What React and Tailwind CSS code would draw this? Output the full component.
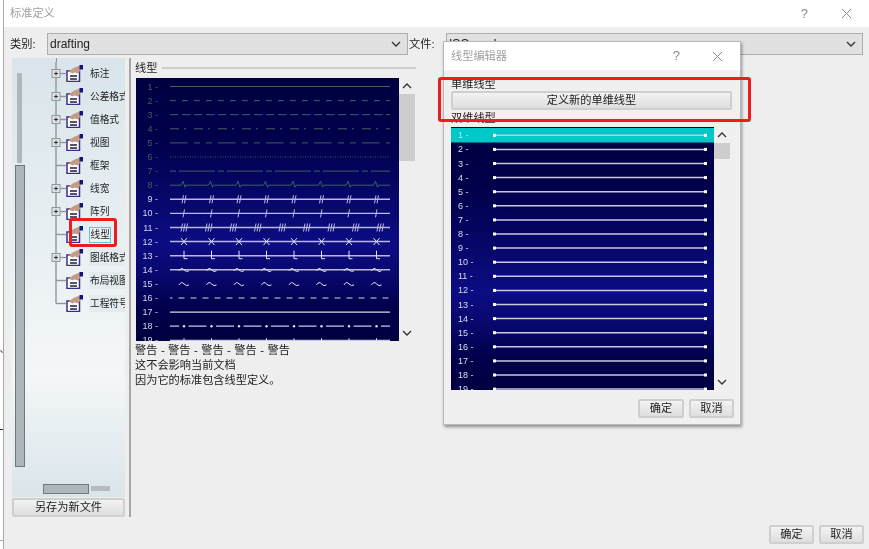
import React from 'react';

const cjk = "font-['Liberation_Sans','Noto_Sans_CJK_SC',sans-serif]";

const treeItems = [
  { name: '标注', plus: true },
  { name: '公差格式', plus: true },
  { name: '值格式', plus: true },
  { name: '视图', plus: true },
  { name: '框架' },
  { name: '线宽', plus: true },
  { name: '阵列', plus: true },
  { name: '线型', selected: true },
  { name: '图纸格式', plus: true, shaded: true },
  { name: '布局视图', shaded: true },
  { name: '工程符号', shaded: true, last: true },
];

const range = (n) => Array.from({ length: n }, (_, i) => i);

function Chevron({ up }) {
  return (
    <svg width="10" height="6" viewBox="0 0 10 6" fill="none" stroke="#333" strokeWidth="1.3">
      <path d={up ? 'M1 5l4-4 4 4' : 'M1 1l4 4 4-4'} />
    </svg>
  );
}

function TreeIcon() {
  return (
    <svg width="17" height="17" viewBox="0 0 17 17" className="shrink-0">
      <rect x="1" y="6" width="12.5" height="10.5" fill="#fff" stroke="#3c2f85" strokeWidth="1.5" />
      <path d="M2.5 6.5l5-3.5 6-2.5 1 4-2 4-4-1-2 1z" fill="#c49c86" />
      <rect x="13.5" y="0" width="3.5" height="4.5" fill="#14147a" />
      <path d="M4 11h7M4 14h7" stroke="#55556a" strokeWidth="1.8" />
    </svg>
  );
}

function TreeRow({ item }) {
  return (
    <div className="flex h-[23px] items-center">
      <svg width="34" height="23" viewBox="0 0 34 23" className="shrink-0" fill="none">
        <path d={item.last ? 'M6 0v11.5' : 'M6 0v23'} stroke="#8d989d" strokeWidth="1.4" />
        <path d="M6 11.5H16" stroke="#8d989d" strokeWidth="1.4" />
        {item.plus && (
          <>
            <rect x="2" y="7.5" width="8" height="8" fill="#dfe3e5" stroke="#8d989d" />
            <path d="M4 11.5h4M6 9.5v4" stroke="#333" />
          </>
        )}
      </svg>
      <div className="-ml-[18px] mr-[6px]">
        <TreeIcon />
      </div>
      {item.selected ? (
        <span className="h-[16px] whitespace-nowrap border border-[#55cccc] bg-[#eaf2f4] px-[0.5px] text-[9.7px] leading-[14px] text-[#222]">
          {item.name}
        </span>
      ) : (
        <span
          className={
            item.shaded
              ? 'whitespace-nowrap bg-[#e3ebef] py-[1px] pl-[1px] text-[9.7px] leading-[15px] text-[#222]'
              : 'whitespace-nowrap pl-[1px] text-[9.7px] leading-[16px] text-[#222]'
          }
        >
          {item.name}
        </span>
      )}
    </div>
  );
}

function TreePanel() {
  return (
    <div className="flex h-[439px] w-[113px] flex-col overflow-hidden bg-gradient-to-b from-[#d9e5eb] via-[#f4f7f8] via-72% to-[#dae5ea]">
      <div className="flex min-h-0 flex-1">
        <div className="flex w-[30px] shrink-0 flex-col items-start pl-[3px] pt-[15px]">
          <div className="ml-[2px] h-[90px] w-[5px] bg-[#aeb8bc]" />
          <div className="mt-[2px] h-[302px] w-[10px] border border-[#6f787c] bg-[#adb6ba]" />
        </div>
        <div className="min-w-0 flex-1 overflow-hidden pl-[8px]">
          <div className="ml-[5.5px] h-[4px] w-[1.4px] bg-[#8d989d]" />
          {treeItems.map((item) => (
            <TreeRow key={item.name} item={item} />
          ))}
        </div>
      </div>
      <div className="flex h-[13px] shrink-0 items-start pl-[31px]">
        <div className="h-[10px] w-[46px] border border-[#6f787c] bg-[#adb6ba]" />
        <div className="ml-[2px] mt-[2px] h-[5px] w-[19px] bg-[#b4bcc0]" />
      </div>
    </div>
  );
}

function ActionButton({ children, className }) {
  return (
    <button
      className={
        'rounded-[2px] border-2 border-[#cfcfcf] bg-gradient-to-b from-[#f3f3f3] to-[#dedede] text-[11.2px] leading-none text-[#222] ' +
        className
      }
    >
      {children}
    </button>
  );
}

function CanvasScrollbar({ thumb }) {
  return (
    <div className="flex h-full w-[16px] shrink-0 flex-col items-center pt-[5px]">
      <Chevron up />
      <div className={thumb + ' mt-[5px] w-full bg-[#cdcdcd]'} />
      <div className="flex-1" />
      <div className="pb-[5px]">
        <Chevron />
      </div>
    </div>
  );
}

function LineStyleCanvas() {
  const rows = range(19).map((i) => 8.5 + 14.1 * i);
  const dim = '#3f6060';
  const lite = '#b8b8e0';
  const ticks = range(8).map((i) => 48 + 27.5 * i);
  const triple = range(9).map((i) => 48 + 24.5 * i);
  const wave = (x, y) => `M${x - 5} ${y + 1}q2.5-4 5-1t5 1`;
  const solid = (y, color, w) => <path d={`M34 ${y}H254`} stroke={color} strokeWidth={w} />;
  const dashed = (y, color, dash, w = 1, offset = 0) => (
    <path d={`M34 ${y}H254`} stroke={color} strokeWidth={w} strokeDasharray={dash} strokeDashoffset={offset} />
  );

  return (
    <svg width="263" height="263" viewBox="0 0 263 263" className="block shrink-0" fill="none">
      <defs>
        <linearGradient id="canvasBg" x1="0" y1="0" x2="0" y2="1">
          <stop offset="0" stopColor="#000040" />
          <stop offset="0.25" stopColor="#00004c" />
          <stop offset="0.63" stopColor="#0c0c84" />
          <stop offset="0.75" stopColor="#08086c" />
          <stop offset="0.88" stopColor="#00004a" />
          <stop offset="1" stopColor="#000040" />
        </linearGradient>
      </defs>
      <rect width="263" height="263" fill="url(#canvasBg)" />
      {rows.map((y, i) => (
        <text
          key={i}
          x="22"
          y={y + 3}
          textAnchor="end"
          fontSize="9"
          fontFamily="Liberation Sans, sans-serif"
          fill={i < 8 ? dim : '#d4d4ee'}
        >
          {i + 1} -
        </text>
      ))}
      {solid(rows[0], dim, 1)}
      {dashed(rows[1], dim, '6 6')}
      {dashed(rows[2], dim, '8.5 3.5')}
      {dashed(rows[3], dim, '9 5 2 8')}
      {dashed(rows[4], dim, '17.5 6.5 6 6 6 6')}
      {dashed(rows[5], dim, '1 1.5')}
      {dashed(rows[6], dim, '6 3 36 3')}
      <path
        d={`M34 ${rows[7]}` + ticks.map((x) => `H${x - 3}l2-4 2 6 1-2`).join('') + 'H254'}
        stroke={dim}
      />
      {solid(rows[8], lite, 1.5)}
      {ticks.map((x) => (
        <path key={x} d={`M${x - 2} ${rows[8] + 4}l1.5-8M${x + 0.5} ${rows[8] + 4}l1.5-8`} stroke={lite} />
      ))}
      {solid(rows[9], lite, 1.4)}
      {ticks.map((x) => (
        <path key={x} d={`M${x - 1} ${rows[9] + 4}l1.5-8`} stroke={lite} />
      ))}
      {solid(rows[10], lite, 1.4)}
      {triple.map((x) => (
        <path
          key={x}
          d={`M${x - 3} ${rows[10] + 4}l1.5-8M${x - 0.5} ${rows[10] + 4}l1.5-8M${x + 2} ${rows[10] + 4}l1.5-8`}
          stroke={lite}
        />
      ))}
      {solid(rows[11], lite, 1.5)}
      {ticks.map((x) => (
        <path
          key={x}
          d={`M${x - 3} ${rows[11] - 3.5}l6 7M${x + 3} ${rows[11] - 3.5}l-6 7`}
          stroke="#e4e4f6"
        />
      ))}
      {solid(rows[12], lite, 1.5)}
      {ticks.map((x) => (
        <path key={x} d={`M${x} ${rows[12] - 5}v8h3.5`} stroke="#e4e4f6" />
      ))}
      {solid(rows[13], lite, 1.5)}
      {ticks.map((x) => (
        <path key={x} d={wave(x, rows[13])} stroke="#e4e4f6" />
      ))}
      {ticks.map((x) => (
        <path key={x} d={wave(x, rows[14])} stroke="#e4e4f6" />
      ))}
      {dashed(rows[15], '#d0d0ec', '6 6', 1.2, 3.5)}
      {solid(rows[16], '#d6d6ee', 1.3)}
      {dashed(rows[17], '#c8c8e8', '18 9.5', 1.2, 9)}
      {ticks.map((x) => (
        <circle key={x} cx={x} cy={rows[17]} r="1.2" fill="#e4e4f6" />
      ))}
      {solid(rows[18], '#c8c8e8', 1.2)}
      {ticks.map((x) => (
        <path key={x} d={`M${x} ${rows[18] - 2}v3`} stroke="#e4e4f6" />
      ))}
    </svg>
  );
}

function DoubleLineCanvas() {
  const rows = range(19).map((i) => 8.3 + 14.1 * i);
  return (
    <svg width="263" height="263" viewBox="0 0 263 263" className="block shrink-0" fill="none">
      <defs>
        <linearGradient id="dialogBg" x1="0" y1="0" x2="0" y2="1">
          <stop offset="0" stopColor="#000040" />
          <stop offset="0.25" stopColor="#00004c" />
          <stop offset="0.63" stopColor="#0c0c84" />
          <stop offset="0.75" stopColor="#08086c" />
          <stop offset="0.88" stopColor="#00004a" />
          <stop offset="1" stopColor="#000040" />
        </linearGradient>
      </defs>
      <rect width="263" height="263" fill="url(#dialogBg)" />
      <rect y="1" width="263" height="14.5" fill="#00c8c8" />
      {rows.map((y, i) => (
        <g key={i}>
          <text
            x="7"
            y={y + 3}
            fontSize="9"
            fontFamily="Liberation Sans, sans-serif"
            fill={i === 0 ? '#9ff0f0' : '#dcdcf0'}
          >
            {i + 1} -
          </text>
          <path d={`M43 ${y}H255`} stroke="#c8c8e0" strokeWidth="1.5" />
          <rect x="42" y={y - 1.5} width="3" height="3" fill="#fff" />
          <rect x="253" y={y - 1.5} width="3" height="3" fill="#fff" />
        </g>
      ))}
    </svg>
  );
}

function CloseIcon() {
  return (
    <svg width="11" height="11" viewBox="0 0 11 11" fill="none" stroke="#8a8a8a" strokeWidth="1">
      <path d="M1 1l9 9M10 1l-9 9" />
    </svg>
  );
}

function SelectBox({ children, className }) {
  return (
    <div
      className={
        'flex h-[22px] items-center justify-between border border-[#adadad] bg-[#e1e1e1] pl-[2px] pr-[6px] text-[12px] text-[#222] ' +
        className
      }
    >
      <span>{children}</span>
      <Chevron />
    </div>
  );
}

function LineEditorDialog() {
  return (
    <div className="absolute left-[443px] top-[41px] flex h-[384px] w-[298px] flex-col border border-[#b8b8b8] bg-[#f0f0f0] shadow-[1px_2px_3px_rgba(0,0,0,0.4)]">
      <div className="flex h-[28px] shrink-0 items-center bg-white pl-[7px] text-[11.2px] text-[#a0a0a0]">
        <span className="flex-1">线型编辑器</span>
        <span className="mr-[32px] text-[13px] text-[#8a8a8a]">?</span>
        <span className="mr-[17px]">
          <CloseIcon />
        </span>
      </div>
      <div className="flex flex-1 flex-col pl-[7px] pr-[8px]">
        <div className="mt-[7px] text-[11.2px] leading-[14px] text-[#222]">单维线型</div>
        <ActionButton className="h-[19px] w-[281px]">定义新的单维线型</ActionButton>
        <div className="mt-[1px] h-[16px] text-[11.2px] leading-[14px] text-[#222]">双维线型</div>
        <div className="flex h-[263px]">
          <DoubleLineCanvas />
          <CanvasScrollbar thumb="h-[16px]" />
        </div>
        <div className="-mr-[2px] mt-[9px] flex justify-end gap-[5px]">
          <ActionButton className="h-[19px] w-[46px]">确定</ActionButton>
          <ActionButton className="h-[19px] w-[45px]">取消</ActionButton>
        </div>
      </div>
    </div>
  );
}

export default function App() {
  return (
    <div className={cjk + ' relative flex h-[549px] w-[869px] overflow-hidden bg-white blur-[0.35px]'}>
      <div className="relative w-[3px] shrink-0">
        <div className="absolute left-0 top-[351px] h-[1px] w-[3px] rotate-45 bg-[#555]" />
        <div className="absolute left-0 top-[429px] h-[1px] w-[3px] bg-[#333]" />
        <div className="absolute left-0 top-[540px] h-[1px] w-[3px] bg-[#aaa]" />
      </div>
      <div className="flex min-w-0 flex-1 flex-col border-l border-[#a8a8a8]">
        <div className="flex h-[27px] shrink-0 items-center bg-white pl-[6px] text-[11.2px] text-[#a0a0a0]">
          <span className="flex-1">标准定义</span>
          <span className="mr-[33px] text-[13px] text-[#8a8a8a]">?</span>
          <span className="mr-[17px]">
            <CloseIcon />
          </span>
        </div>
        <div className="flex min-h-0 flex-1 flex-col bg-[#eeeeee] pl-[8px] pr-[6px] pt-[6px]">
          <div className="flex h-[22px] shrink-0 items-center text-[11.2px] text-[#222]">
            <span className="-ml-[2px] w-[37px] shrink-0">类别:</span>
            <SelectBox className="w-[361px]">drafting</SelectBox>
            <span className="w-[38px] shrink-0 pl-[1px]">文件:</span>
            <SelectBox className="w-[417px]">ISO.sprd</SelectBox>
          </div>
          <div className="mt-[3px] flex shrink-0">
            <div className="flex w-[113px] shrink-0 flex-col">
              <TreePanel />
              <ActionButton className="mt-[1px] h-[19px] w-[113px]">另存为新文件</ActionButton>
            </div>
            <div className="ml-[2px] h-[459px] w-[4px] border-r-2 border-[#a6a6a6]" />
            <div className="w-[285px] pl-[4px]">
              <div className="flex h-[20px] items-center text-[11.2px] text-[#222]">
                <span>线型</span>
                <div className="ml-[5px] h-[2px] flex-1 bg-[#cfcfcf]" />
              </div>
              <div className="flex h-[263px] pl-[1px]">
                <LineStyleCanvas />
                <CanvasScrollbar thumb="h-[67px]" />
              </div>
              <div className="mt-[2px] text-[11.2px] leading-[15px] text-[#222]">
                <div className="[word-spacing:0.4px]">警告 - 警告 - 警告 - 警告 - 警告</div>
                <div>这不会影响当前文档</div>
                <div>因为它的标准包含线型定义。</div>
              </div>
            </div>
          </div>
          <div className="-mr-[1px] flex flex-1 items-start justify-end gap-[5px] pt-[8px]">
            <ActionButton className="h-[19px] w-[45px]">确定</ActionButton>
            <ActionButton className="h-[19px] w-[45px]">取消</ActionButton>
          </div>
        </div>
      </div>
      <LineEditorDialog />
      <div className="absolute left-[69px] top-[218px] h-[29px] w-[48px] rounded-[3px] border-[3px] border-[#ee1c1c]" />
      <div className="absolute left-[438px] top-[77px] h-[45px] w-[313px] rounded-[3px] border-[3px] border-[#ee1c1c]" />
    </div>
  );
}
